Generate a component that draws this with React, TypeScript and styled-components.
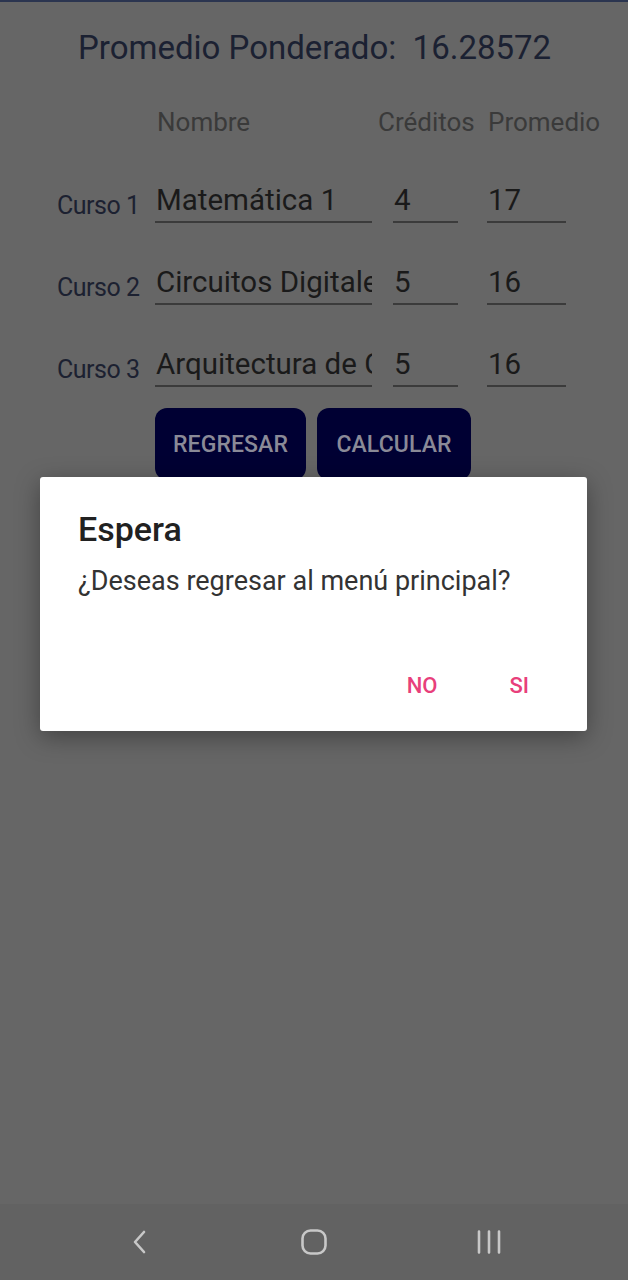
import React from "react";
import styled, { createGlobalStyle } from "styled-components";

const Global = createGlobalStyle`
  html, body { margin: 0; padding: 0; }
  body { background: #666666; font-family: Roboto, "Noto Sans", sans-serif; }
  #root { min-height: 1280px; }
`;

const Screen = styled.div`
  position: relative;
  width: 628px;
  height: 1280px;
  background: #666666;
  display: flex;
  flex-direction: column;
  overflow: hidden;
`;

const TopLine = styled.div`
  height: 2px;
  background: #2b3550;
`;

const Content = styled.main`
  flex: 1;
  display: flex;
  flex-direction: column;
`;

const Title = styled.h1`
  margin: 26px 0 0 78px;
  font-size: 33px;
  font-weight: 400;
  color: #1b2132;
  line-height: 40px;
  white-space: pre;
`;

const HeaderRow = styled.div`
  display: flex;
  margin: 39px 0 0 157px;
`;

const HeaderCell = styled.div<{ $w?: number }>`
  width: ${(p) => (p.$w ? `${p.$w}px` : "auto")};
  font-size: 26px;
  color: #3a3a3a;
  line-height: 30px;
  white-space: nowrap;
`;

const Grid = styled.div`
  display: grid;
  grid-template-columns: 98px 217px 21px 65px 29px 79px;
  margin: 0 0 0 57px;
  align-items: end;
`;

const RowLabel = styled.div`
  grid-column: 1;
  font-size: 25px;
  color: #1c2131;
  letter-spacing: -0.5px;
  line-height: 30px;
  padding-bottom: 2px;
  white-space: nowrap;
`;

const Field = styled.input<{ $col: number }>`
  grid-column: ${(p) => p.$col};
  min-width: 0;
  width: 100%;
  box-sizing: border-box;
  margin: 0;
  border: none;
  border-bottom: 2px solid #3b3b3b;
  border-radius: 0;
  background: transparent;
  outline: none;
  font-family: Roboto, "Noto Sans", sans-serif;
  font-size: 29.5px;
  color: #1a1a1a;
  height: 41px;
  line-height: 36px;
  padding: 0 0 3px 1px;
`;

const RowGap = styled.div<{ $h: number }>`
  grid-column: 1 / -1;
  height: ${(p) => p.$h}px;
`;

const Buttons = styled.div`
  display: flex;
  gap: 11px;
  margin: 21px 0 0 155px;
`;

const DarkButton = styled.div<{ $w: number }>`
  width: ${(p) => p.$w}px;
  height: 72px;
  background: #000033;
  border-radius: 12px;
  display: flex;
  align-items: center;
  justify-content: center;
  color: #8a8a97;
  font-size: 23px;
  font-weight: 500;
  letter-spacing: 0.1px;
`;

const NavBar = styled.nav`
  height: 76px;
  background: #626262;
  display: flex;
  align-items: center;
  justify-content: center;
  gap: 115px;
`;

const NavIcon = styled.div`
  width: 60px;
  display: flex;
  justify-content: center;
  color: #c8c8c8;
`;

const Dialog = styled.div`
  position: absolute;
  left: 40px;
  top: 477px;
  width: 547px;
  height: 254px;
  background: #ffffff;
  border-radius: 3px;
  box-shadow: 0 6px 24px rgba(0, 0, 0, 0.35);
  display: flex;
  flex-direction: column;
  box-sizing: border-box;
  padding: 33px 38px 0 38px;
`;

const DialogTitle = styled.div`
  font-size: 34px;
  font-weight: 500;
  color: #212121;
  line-height: 38px;
`;

const DialogText = styled.div`
  margin-top: 17px;
  font-size: 27px;
  color: #333333;
  line-height: 32px;
`;

const DialogActions = styled.div`
  margin-top: auto;
  margin-bottom: 32px;
  display: flex;
  justify-content: flex-end;
  gap: 72px;
  padding-right: 20px;
`;

const ActionButton = styled.div`
  color: #e83f7b;
  font-size: 22px;
  font-weight: 500;
  line-height: 26px;
`;

export default function App() {
  const rows = [
    ["Curso 1", "Matemática 1", "4", "17"],
    ["Curso 2", "Circuitos Digitales", "5", "16"],
    ["Curso 3", "Arquitectura de Computadoras", "5", "16"],
  ];
  return (
    <>
      <Global />
      <Screen>
        <TopLine />
        <Content>
          <Title>{"Promedio Ponderado:  16.28572"}</Title>
          <HeaderRow>
            <HeaderCell $w={221}>Nombre</HeaderCell>
            <HeaderCell $w={110}>Créditos</HeaderCell>
            <HeaderCell>Promedio</HeaderCell>
          </HeaderRow>
          <Grid>
            {rows.map((r, i) => (
              <React.Fragment key={r[0]}>
                <RowGap $h={i === 0 ? 45 : 41} />
                <RowLabel>{r[0]}</RowLabel>
                <Field $col={2} readOnly value={r[1]} />
                <Field $col={4} readOnly value={r[2]} />
                <Field $col={6} readOnly value={r[3]} />
              </React.Fragment>
            ))}
          </Grid>
          <Buttons>
            <DarkButton $w={151}>REGRESAR</DarkButton>
            <DarkButton $w={154}>CALCULAR</DarkButton>
          </Buttons>
        </Content>
        <NavBar>
          <NavIcon>
            <svg width="20" height="28" viewBox="0 0 20 28">
              <path d="M15 4 L6 14 L15 24" fill="none" stroke="currentColor" strokeWidth="2.6" strokeLinecap="round" strokeLinejoin="round" />
            </svg>
          </NavIcon>
          <NavIcon>
            <svg width="28" height="28" viewBox="0 0 28 28">
              <rect x="2.5" y="2.5" width="23" height="23" rx="8" fill="none" stroke="currentColor" strokeWidth="2.6" />
            </svg>
          </NavIcon>
          <NavIcon>
            <svg width="28" height="28" viewBox="0 0 28 28">
              <path d="M4 3.5 V24.5 M14 3.5 V24.5 M24 3.5 V24.5" fill="none" stroke="currentColor" strokeWidth="2.6" strokeLinecap="round" />
            </svg>
          </NavIcon>
        </NavBar>
        <Dialog>
          <DialogTitle>Espera</DialogTitle>
          <DialogText>¿Deseas regresar al menú principal?</DialogText>
          <DialogActions>
            <ActionButton>NO</ActionButton>
            <ActionButton>SI</ActionButton>
          </DialogActions>
        </Dialog>
      </Screen>
    </>
  );
}
